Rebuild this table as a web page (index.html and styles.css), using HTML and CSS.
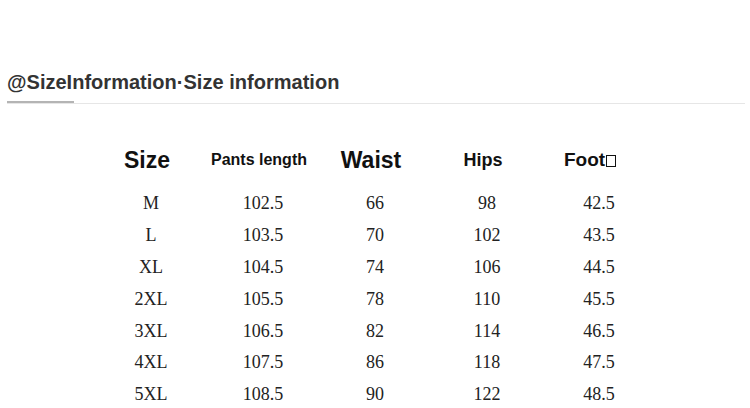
FILE: index.html
```html
<!DOCTYPE html>
<html>
<head>
<meta charset="utf-8">
<link rel="stylesheet" href="styles.css">
</head>
<body>
<div class="page">
  <div class="title-bar">
    <h2 class="title">@SizeInformation·Size information</h2>
  </div>
  <div class="rule"><span class="rule-accent"></span></div>
  <div class="table">
    <div class="row head">
      <div class="cell h-lg">Size</div>
      <div class="cell h-sm">Pants length</div>
      <div class="cell h-lg">Waist</div>
      <div class="cell h-md">Hips</div>
      <div class="cell h-md foot">Foot<span class="tofu"></span></div>
    </div>
    <div class="row"><div class="cell">M</div><div class="cell">102.5</div><div class="cell">66</div><div class="cell">98</div><div class="cell">42.5</div></div>
    <div class="row"><div class="cell">L</div><div class="cell">103.5</div><div class="cell">70</div><div class="cell">102</div><div class="cell">43.5</div></div>
    <div class="row"><div class="cell">XL</div><div class="cell">104.5</div><div class="cell">74</div><div class="cell">106</div><div class="cell">44.5</div></div>
    <div class="row"><div class="cell">2XL</div><div class="cell">105.5</div><div class="cell">78</div><div class="cell">110</div><div class="cell">45.5</div></div>
    <div class="row"><div class="cell">3XL</div><div class="cell">106.5</div><div class="cell">82</div><div class="cell">114</div><div class="cell">46.5</div></div>
    <div class="row"><div class="cell">4XL</div><div class="cell">107.5</div><div class="cell">86</div><div class="cell">118</div><div class="cell">47.5</div></div>
    <div class="row"><div class="cell">5XL</div><div class="cell">108.5</div><div class="cell">90</div><div class="cell">122</div><div class="cell">48.5</div></div>
  </div>
</div>
</body>
</html>
```
FILE: styles.css
```css
html, body {
  margin: 0;
  padding: 0;
  background: #ffffff;
}
.page {
  width: 750px;
  height: 408px;
  overflow: hidden;
  padding: 70px 5px 0 7px;
  box-sizing: border-box;
}
.title {
  margin: 0;
  font-family: "Liberation Sans", Arial, sans-serif;
  font-weight: bold;
  font-size: 20px;
  line-height: 24px;
  color: #333333;
  letter-spacing: 0.02px;
}
.rule {
  margin-top: 9px;
  height: 1px;
  background: #e6e6e6;
  position: relative;
}
.rule-accent {
  position: absolute;
  left: 0;
  top: -2px;
  width: 67px;
  height: 2px;
  background: #b4b4b4;
}
.table {
  margin-top: 42px;
  margin-left: 88px;
  display: flex;
  flex-direction: column;
}
.row {
  display: grid;
  grid-template-columns: repeat(5, 112px);
  height: 31.8px;
  align-items: center;
  font-family: "Liberation Serif", "Times New Roman", serif;
  font-size: 18px;
  color: #222222;
}
.row.head {
  height: 28px;
  margin-bottom: 14px;
  font-family: "Liberation Sans", Arial, sans-serif;
  font-weight: bold;
  color: #111111;
}
.cell {
  text-align: center;
}
.head .cell {
  padding-right: 8px;
}
.h-lg { font-size: 23px; }
.h-sm { font-size: 16px; }
.h-md { font-size: 18px; }
.head .foot {
  font-size: 19px;
  padding-right: 18px;
}
.tofu {
  display: inline-block;
  width: 10px;
  height: 12px;
  border: 1px solid #111;
  box-sizing: border-box;
  margin-left: 1px;
  vertical-align: -1px;
}
```
